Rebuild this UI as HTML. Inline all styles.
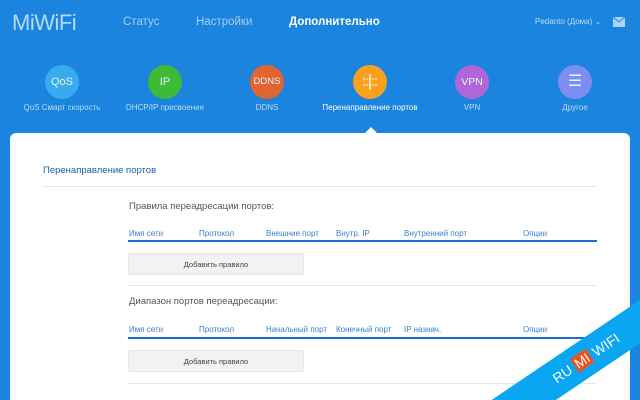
<!DOCTYPE html>
<html><head><meta charset="utf-8"><style>
*{margin:0;padding:0;box-sizing:border-box}
html,body{width:640px;height:400px;overflow:hidden}
body{background:#1a84de;font-family:"Liberation Sans",sans-serif;position:relative}
.a{position:absolute;white-space:nowrap}
.logo{left:12px;top:10px;font-size:22px;color:#b5dafa;letter-spacing:-0.5px}
.nav{top:16px;font-size:11.5px;color:#a7cdf0}
.c{width:34px;height:34px;border-radius:50%;top:65px;color:#e8f3ff;font-size:11px;text-align:center;line-height:34px}
.l{top:103px;font-size:8px;color:#bcdaf5;transform:translateX(-50%)}
.card{left:10px;top:133px;width:620px;height:267px;background:#fff;border-radius:6px 6px 0 0}
.th{font-size:8px;color:#3a7fd0}
.h{font-size:9.5px;color:#555}
.btn{background:#f2f2f2;border:1px solid #e6e6e6;border-radius:2px;width:176px;height:22px;font-size:7.5px;color:#444;text-align:center;line-height:21px}
.ln{height:1px;background:#e6e6e6}
.bl{height:2px;background:#1b6fd0;left:128px;width:469px}
#rbw{position:absolute;left:440px;top:300px;width:200px;height:100px;overflow:hidden}
#rb{position:absolute;left:-10px;top:34px;width:300px;height:36px;background:#0ba6f2;transform:translate(6px,6px) rotate(-34deg);color:#fff;font-size:14px;text-align:center;line-height:36px}
</style></head><body>
<div class="a logo">MiWiFi</div>
<div class="a nav" style="left:123px">Статус</div>
<div class="a nav" style="left:196px">Настройки</div>
<div class="a nav" style="left:289px;color:#fff;font-weight:bold">Дополнительно</div>
<div class="a" style="left:535px;top:17px;font-size:8px;color:#bcdaf5">Pedanto (Дома) <span style="font-size:8px">⌄</span></div>
<svg class="a" style="left:613px;top:17px" width="12" height="10"><rect width="12" height="10" fill="#a9d4f7"/><path d="M0 0L6 5L12 0" stroke="#1a84de" fill="none"/></svg>

<div class="a c" style="left:45px;background:#38aaf0">QoS</div>
<div class="a c" style="left:148px;background:#3dbb35">IP</div>
<div class="a c" style="left:250px;background:#e0652e;font-size:9.5px">DDNS</div>
<div class="a c" style="left:353px;background:#f9a11d"><svg width="34" height="34" style="display:block"><path d="M10 14H24M10 20H24" stroke="#fff" stroke-width="1" stroke-dasharray="2 1"/><path d="M17 9V25" stroke="#fff" stroke-width="1.2"/></svg></div>
<div class="a c" style="left:455px;background:#b066d6;font-size:10.5px">VPN</div>
<div class="a c" style="left:558px;background:#7c8ff0;font-size:16px">☰</div>
<div class="a l" style="left:62px">QoS Смарт скорость</div>
<div class="a l" style="left:165px">DHCP/IP присвоение</div>
<div class="a l" style="left:267px">DDNS</div>
<div class="a l" style="left:370px;color:#fff">Перенаправление портов</div>
<div class="a l" style="left:472px">VPN</div>
<div class="a l" style="left:575px">Другое</div>

<div class="a card"></div>
<div class="a" style="left:365px;top:127px;width:0;height:0;border-left:6px solid transparent;border-right:6px solid transparent;border-bottom:6px solid #fff"></div>
<div class="a" style="left:43px;top:165px;font-size:9.5px;color:#1d5fb3">Перенаправление портов</div>
<div class="a ln" style="left:42px;top:186px;width:555px"></div>
<div class="a h" style="left:129px;top:201px">Правила переадресации портов:</div>
<div class="a th" style="left:129px;top:229px">Имя сети</div>
<div class="a th" style="left:199px;top:229px">Протокол</div>
<div class="a th" style="left:266px;top:229px">Внешние порт</div>
<div class="a th" style="left:336px;top:229px">Внутр. IP</div>
<div class="a th" style="left:404px;top:229px">Внутренний порт</div>
<div class="a th" style="left:523px;top:229px">Опции</div>
<div class="a bl" style="top:240px"></div>
<div class="a btn" style="left:128px;top:253px">Добавить правило</div>
<div class="a ln" style="left:128px;top:285px;width:469px"></div>
<div class="a h" style="left:129px;top:296px">Диапазон портов переадресации:</div>
<div class="a th" style="left:129px;top:325px">Имя сети</div>
<div class="a th" style="left:199px;top:325px">Протокол</div>
<div class="a th" style="left:266px;top:325px">Начальный порт</div>
<div class="a th" style="left:336px;top:325px">Конечный порт</div>
<div class="a th" style="left:404px;top:325px">IP назнач.</div>
<div class="a th" style="left:523px;top:325px">Опции</div>
<div class="a bl" style="top:337px"></div>
<div class="a btn" style="left:128px;top:350px">Добавить правило</div>
<div class="a ln" style="left:128px;top:383px;width:469px"></div>

<div id="rbw"><div id="rb">RU <span style="background:#f0501e;padding:0 2px">MI</span> WIFI</div></div>
</body></html>
